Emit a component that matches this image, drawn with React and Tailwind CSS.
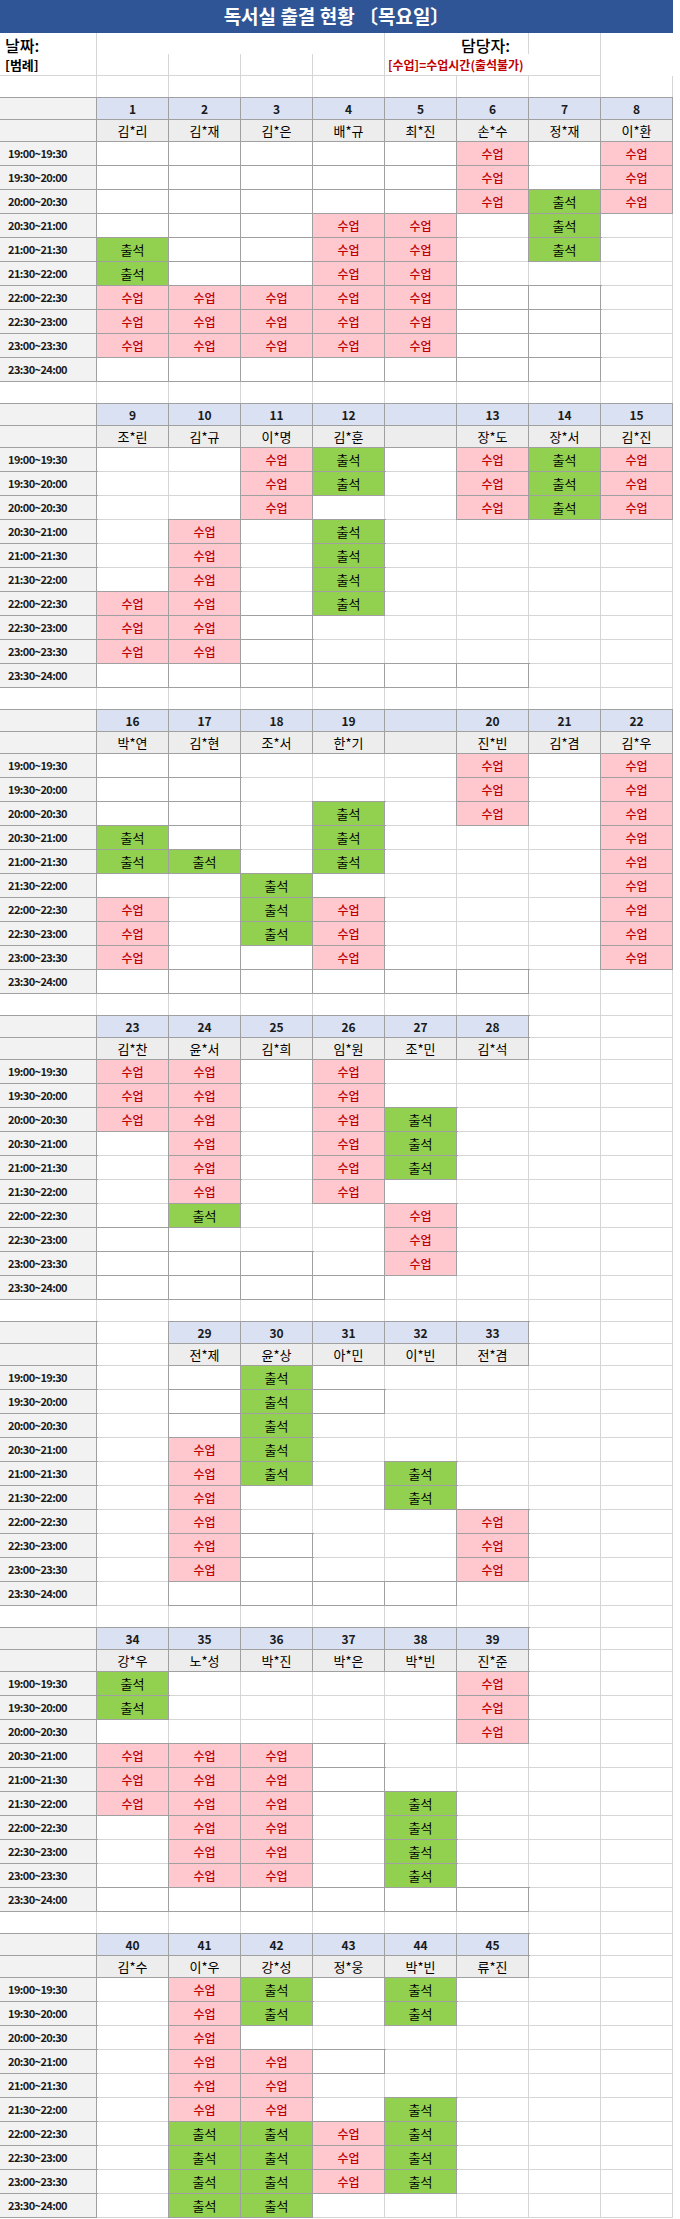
import React from "react";

// 시간대 (30분 단위)
const TIMES = [
  "19:00~19:30",
  "19:30~20:00",
  "20:00~20:30",
  "20:30~21:00",
  "21:00~21:30",
  "21:30~22:00",
  "22:00~22:30",
  "22:30~23:00",
  "23:00~23:30",
  "23:30~24:00",
];

// S = 수업, C = 출석, x = 테두리 있는 빈칸, . = 빈칸
const BLOCKS = [
  {
    nums: ["1", "2", "3", "4", "5", "6", "7", "8"],
    names: ["김*리", "김*재", "김*은", "배*규", "최*진", "손*수", "정*재", "이*환"],
    rows: [
      "xxxxxS.S",
      "xxxxxS.S",
      "xxxxxSCS",
      "xxxSS.C.",
      "CxxSS.C.",
      "CxxSS...",
      "SSSSSxx.",
      "SSSSSxx.",
      "SSSSSxx.",
      "xxxxxxx.",
    ],
  },
  {
    nums: ["9", "10", "11", "12", "", "13", "14", "15"],
    names: ["조*린", "김*규", "이*명", "김*훈", "", "장*도", "장*서", "김*진"],
    rows: [
      "..SC.SCS",
      "..SC.SCS",
      "..S..SCS",
      ".S.C....",
      ".S.C....",
      ".S.C....",
      "SS.C....",
      "SSx.....",
      "SSx.....",
      "xxxxxx..",
    ],
  },
  {
    nums: ["16", "17", "18", "19", "", "20", "21", "22"],
    names: ["박*연", "김*현", "조*서", "한*기", "", "진*빈", "김*겸", "김*우"],
    rows: [
      "xx...S.S",
      "xx...S.S",
      "xx.C.S.S",
      "Cx.C...S",
      "CC.C...S",
      "..C....S",
      "S.CS...S",
      "S.CS...S",
      "S.xS...S",
      "xxxxxx..",
    ],
  },
  {
    nums: ["23", "24", "25", "26", "27", "28", null, null],
    names: ["김*찬", "윤*서", "김*희", "임*원", "조*민", "김*석", null, null],
    rows: [
      "SS.S....",
      "SS.S....",
      "SS.SC...",
      ".S.SC...",
      ".S.SC...",
      ".S.S....",
      ".C..S...",
      "x...S...",
      "xxx.S...",
      "xxxx....",
    ],
  },
  {
    nums: [null, "29", "30", "31", "32", "33", null, null],
    names: [null, "전*제", "윤*상", "아*민", "이*빈", "전*겸", null, null],
    rows: [
      ".xC.....",
      ".xCx....",
      ".xC.....",
      ".SC.....",
      ".SC.C...",
      ".S..C...",
      ".S...S..",
      ".Sx..S..",
      ".Sx..S..",
      ".xxxx...",
    ],
  },
  {
    nums: ["34", "35", "36", "37", "38", "39", null, null],
    names: ["강*우", "노*성", "박*진", "박*은", "박*빈", "진*준", null, null],
    rows: [
      "C....S..",
      "C....S..",
      ".....S..",
      "SSSx....",
      "SSSx....",
      "SSS.C...",
      ".SS.C...",
      ".SS.C...",
      ".SS.C...",
      "xxxxxx..",
    ],
  },
  {
    nums: ["40", "41", "42", "43", "44", "45", null, null],
    names: ["김*수", "이*우", "강*성", "정*웅", "박*빈", "류*진", null, null],
    rows: [
      ".SC.C...",
      ".SC.C...",
      ".S......",
      ".SSx....",
      ".SS.....",
      ".SS.C...",
      ".CCSC...",
      ".CCSC...",
      ".CCSC...",
      ".CC.....",
    ],
  },
];

const ROW = "grid grid-cols-[97px_repeat(8,72px)]";
const BASE = "flex items-center justify-center border-r border-b";
const LIGHT = "border-[#d6d6d6] bg-white";
const DARK = "border-[#a0a0a0] shadow-[0_0_0_1px_#a0a0a0]";

const DataCell = ({ kind }) => {
  if (kind === "S") {
    return (
      <div className={`${BASE} ${DARK} bg-[#ffc7ce] text-[12px] font-medium text-[#c00000]`}>
        수업
      </div>
    );
  }
  if (kind === "C") {
    return (
      <div className={`${BASE} ${DARK} bg-[#92d050] text-[13px] text-black`}>
        출석
      </div>
    );
  }
  if (kind === "x") return <div className={`${BASE} ${DARK} bg-white`} />;
  return <div className={`${BASE} ${LIGHT}`} />;
};

const Block = ({ block, last }) => (
  <>
    <div className={`${ROW} h-[22px]`}>
      <div className={`${BASE} ${DARK} bg-[#f2f2f2]`} />
      {block.nums.map((n, i) =>
        n === null ? (
          <div key={i} className={`${BASE} ${LIGHT}`} />
        ) : (
          <div key={i} className={`${BASE} ${DARK} bg-[#d9e1f2] text-[12px] font-bold text-[#1a1a1a]`}>
            {n}
          </div>
        )
      )}
    </div>
    <div className={`${ROW} h-[22px]`}>
      <div className={`${BASE} ${DARK} bg-[#f2f2f2]`} />
      {block.names.map((n, i) =>
        n === null ? (
          <div key={i} className={`${BASE} ${LIGHT}`} />
        ) : (
          <div key={i} className={`${BASE} ${DARK} bg-[#ededed] text-[13px] text-black`}>
            {n}
          </div>
        )
      )}
    </div>
    {block.rows.map((r, ri) => (
      <div key={ri} className={`${ROW} h-[24px]`}>
        <div className={`flex items-center border-r border-b ${DARK} bg-[#f2f2f2]`}>
          <span className="w-[75px] text-center text-[11px] font-bold tracking-[-0.6px] text-[#1a1a1a]">
            {TIMES[ri]}
          </span>
        </div>
        {r.split("").map((k, ci) => (
          <DataCell key={ci} kind={k} />
        ))}
      </div>
    ))}
    {!last && (
      <div className={`${ROW} h-[22px]`}>
        {Array.from({ length: 9 }).map((_, i) => (
          <div key={i} className={`${BASE} ${LIGHT}`} />
        ))}
      </div>
    )}
  </>
);

export default function App() {
  return (
    <div className="w-[680px] bg-white font-[family-name:'Noto_Sans_CJK_KR',sans-serif]">
      <div className="w-[673px] overflow-hidden">
        <div className="flex h-[33px] items-center justify-center bg-[#2f5597] text-[19px] font-bold text-white">
          독서실 출결 현황 〔목요일〕
        </div>

        <div className={`${ROW} h-[21px]`}>
          <div className={`flex items-center border-r border-b ${LIGHT} pl-[5px] text-[16px] font-medium text-black`}>
            날짜:
          </div>
          <div className={`col-span-4 border-r border-b ${LIGHT}`} />
          <div className="border-b border-[#d6d6d6] bg-white" />
          <div className={`flex items-center border-r border-b ${LIGHT} pl-[4px] text-[16px] font-medium text-black`}>
            담당자:
          </div>
          <div className={`border-r border-b ${LIGHT}`} />
        </div>

        <div className={`${ROW} h-[22px]`}>
          <div className={`flex items-center border-r border-b ${LIGHT} pl-[5px] text-[13px] font-bold text-black`}>
            [범례]
          </div>
          <div className={`border-r border-b ${LIGHT}`} />
          <div className={`border-r border-b ${LIGHT}`} />
          <div className={`border-r border-b ${LIGHT}`} />
          <div className={`border-r border-b ${LIGHT}`} />
          <div className={`col-span-3 flex items-center border-r border-b ${LIGHT} pl-[3px] text-[12px] font-semibold text-[#c00000]`}>
            [수업]=수업시간(출석불가)
          </div>
        </div>

        <div className={`${ROW} h-[22px]`}>
          {Array.from({ length: 9 }).map((_, i) => (
            <div key={i} className={`border-r border-b ${LIGHT}`} />
          ))}
        </div>

        {BLOCKS.map((b, i) => (
          <Block key={i} block={b} last={i === BLOCKS.length - 1} />
        ))}
      </div>
    </div>
  );
}
